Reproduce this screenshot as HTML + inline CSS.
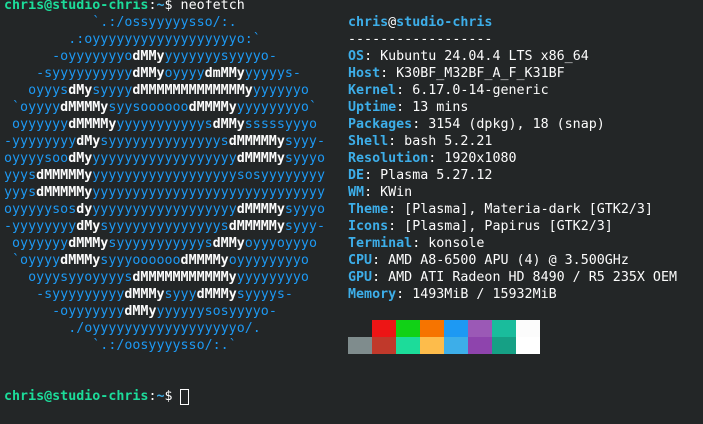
<!DOCTYPE html>
<html><head><meta charset="utf-8">
<style>
html,body{margin:0;padding:0;background:#232627;width:703px;height:424px;overflow:hidden}
pre{position:absolute;top:-3.5px;margin:0;font-family:"DejaVu Sans Mono","Liberation Mono",monospace;font-size:13.33px;line-height:17px;color:#fcfcfc;white-space:pre}
.c{color:#1d99f3}
.w{color:#fcfcfc;font-weight:bold}
.l{color:#3daee9;font-weight:bold}
.g{color:#1cdc9a;font-weight:bold}
.b{color:#3daee9;font-weight:bold}
.sw{position:absolute;width:24px;height:17px}
.cur{position:absolute;left:180px;top:389px;width:7px;height:14px;border:1px solid #fcfcfc}
</style></head><body>
<pre style="left:4px"><span class="g">chris@studio-chris</span>:<span class="b">~</span>$ neofetch
<span class="c">           `.:/ossyyyyysso/:.</span>
<span class="c">        .:oyyyyyyyyyyyyyyyyyyo:`</span>
<span class="c">      -oyyyyyyyo<span class="w">dMMy</span>yyyyyyysyyyyo-</span>
<span class="c">    -syyyyyyyyyy<span class="w">dMMy</span>oyyyy<span class="w">dmMMy</span>yyyyys-</span>
<span class="c">   oyyys<span class="w">dMy</span>syyyy<span class="w">dMMMMMMMMMMMMMy</span>yyyyyyo</span>
<span class="c"> `oyyyy<span class="w">dMMMMy</span>syysoooooo<span class="w">dMMMMy</span>yyyyyyyyo`</span>
<span class="c"> oyyyyyy<span class="w">dMMMMy</span>yyyyyyyyyyys<span class="w">dMMy</span>sssssyyyo</span>
<span class="c">-yyyyyyyy<span class="w">dMy</span>syyyyyyyyyyyyyys<span class="w">dMMMMMy</span>syyy-</span>
<span class="c">oyyyysoo<span class="w">dMy</span>yyyyyyyyyyyyyyyyyy<span class="w">dMMMMy</span>syyyo</span>
<span class="c">yyys<span class="w">dMMMMMy</span>yyyyyyyyyyyyyyyyyysosyyyyyyyy</span>
<span class="c">yyys<span class="w">dMMMMMy</span>yyyyyyyyyyyyyyyyyyyyyyyyyyyyy</span>
<span class="c">oyyyyysos<span class="w">dy</span>yyyyyyyyyyyyyyyyyy<span class="w">dMMMMy</span>syyyo</span>
<span class="c">-yyyyyyyy<span class="w">dMy</span>syyyyyyyyyyyyyys<span class="w">dMMMMMy</span>syyy-</span>
<span class="c"> oyyyyyy<span class="w">dMMMy</span>syyyyyyyyyyys<span class="w">dMMy</span>oyyyoyyyo</span>
<span class="c"> `oyyyy<span class="w">dMMMy</span>syyyoooooo<span class="w">dMMMMy</span>oyyyyyyyyo</span>
<span class="c">   oyyysyyoyyyys<span class="w">dMMMMMMMMMMMy</span>yyyyyyyyo</span>
<span class="c">    -syyyyyyyyy<span class="w">dMMMy</span>syyy<span class="w">dMMMy</span>syyyys-</span>
<span class="c">      -oyyyyyyy<span class="w">dMMy</span>yyyyyysosyyyyo-</span>
<span class="c">        ./oyyyyyyyyyyyyyyyyyyo/.</span>
<span class="c">           `.:/oosyyyysso/:.`</span>


<span class="g">chris@studio-chris</span>:<span class="b">~</span>$ </pre>
<pre style="left:348px">

<span class="l">chris</span>@<span class="l">studio-chris</span>
------------------
<span class="l">OS</span>: Kubuntu 24.04.4 LTS x86_64
<span class="l">Host</span>: K30BF_M32BF_A_F_K31BF
<span class="l">Kernel</span>: 6.17.0-14-generic
<span class="l">Uptime</span>: 13 mins
<span class="l">Packages</span>: 3154 (dpkg), 18 (snap)
<span class="l">Shell</span>: bash 5.2.21
<span class="l">Resolution</span>: 1920x1080
<span class="l">DE</span>: Plasma 5.27.12
<span class="l">WM</span>: KWin
<span class="l">Theme</span>: [Plasma], Materia-dark [GTK2/3]
<span class="l">Icons</span>: [Plasma], Papirus [GTK2/3]
<span class="l">Terminal</span>: konsole
<span class="l">CPU</span>: AMD A8-6500 APU (4) @ 3.500GHz
<span class="l">GPU</span>: AMD ATI Radeon HD 8490 / R5 235X OEM
<span class="l">Memory</span>: 1493MiB / 15932MiB</pre>
<div class="sw" style="left:372px;top:320px;background:#ed1515"></div>
<div class="sw" style="left:396px;top:320px;background:#11d116"></div>
<div class="sw" style="left:420px;top:320px;background:#f67400"></div>
<div class="sw" style="left:444px;top:320px;background:#1d99f3"></div>
<div class="sw" style="left:468px;top:320px;background:#9b59b6"></div>
<div class="sw" style="left:492px;top:320px;background:#1abc9c"></div>
<div class="sw" style="left:516px;top:320px;background:#fcfcfc"></div>
<div class="sw" style="left:348px;top:337px;background:#7f8c8d"></div>
<div class="sw" style="left:372px;top:337px;background:#c0392b"></div>
<div class="sw" style="left:396px;top:337px;background:#1cdc9a"></div>
<div class="sw" style="left:420px;top:337px;background:#fdbc4b"></div>
<div class="sw" style="left:444px;top:337px;background:#3daee9"></div>
<div class="sw" style="left:468px;top:337px;background:#8e44ad"></div>
<div class="sw" style="left:492px;top:337px;background:#16a085"></div>
<div class="sw" style="left:516px;top:337px;background:#ffffff"></div>
<div class="cur"></div>
</body></html>
